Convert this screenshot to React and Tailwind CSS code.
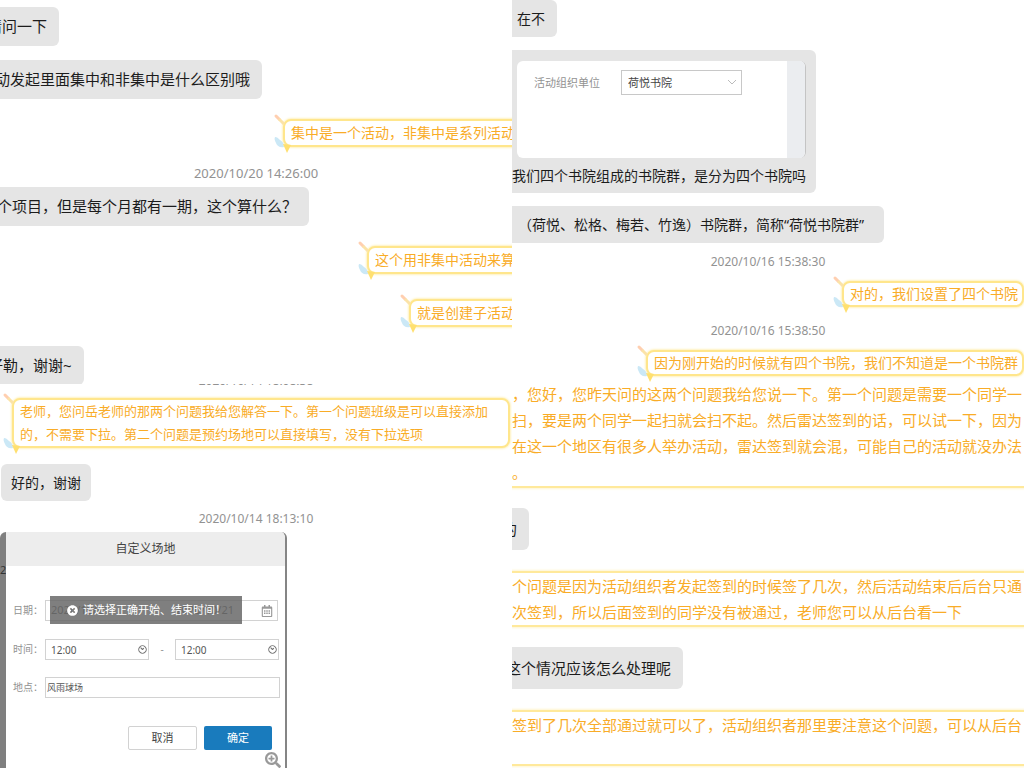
import React from 'react';
import { Clock3 } from 'lucide-react';
import { FaRegCalendarAlt, FaSearchPlus, FaTimesCircle } from 'react-icons/fa';

const Stamp = ({ children, className = '' }) => (
  <time className={`block text-center leading-4 text-[#929292] ${className}`}>{children}</time>
);

const Received = ({ children, className = '' }) => (
  <div className={`w-fit whitespace-nowrap rounded-md bg-[#e5e5e5] px-3 text-[#1c1c1c] ${className}`}>{children}</div>
);

// Crayon in the top left corner, wing and pencil tip in the bottom left one
const BubbleDoodles = () => (
  <>
    <svg className="absolute -top-2 -left-3 h-4 w-4" viewBox="0 0 16 16" fill="none">
      <path d="M3 3l3 3" stroke="#ffcfb0" strokeWidth="3" strokeLinecap="round" />
      <path d="M6 6l5 5" stroke="#fbe3a8" strokeWidth="3" />
    </svg>
    <svg className="absolute -bottom-2.5 -left-3 h-5 w-5" viewBox="0 0 20 20" fill="none">
      <path d="M2 2c2 0 3 1 5 3 2 1 4 3 4 7-4 1-7-1-8-4-1-2-2-4-1-6z" fill="#cbe8f6" />
      <path d="M10 9l8 1-4 8z" fill="#ffe070" />
    </svg>
  </>
);

const Sent = ({ children, className = '' }) => (
  <div
    className={`relative whitespace-nowrap rounded-lg border-2 border-[#ffe68c] bg-white px-1.5 text-[#f9ac27] shadow-[0_0_2px_1px_#fff2bf] ${className}`}
  >
    <BubbleDoodles />
    {children}
  </div>
);

const WideSent = ({ lines, className = '' }) => (
  <div
    className={`whitespace-nowrap border-b-2 border-[#ffe99b] text-[15px] leading-[26px] text-[#f9ac27] shadow-[0_0_2px_1px_#fff5cf] ${className}`}
  >
    {lines.map((line) => (
      <p key={line}>{line}</p>
    ))}
  </div>
);

const GroupQuestions = () => (
  <section className="flex flex-col overflow-hidden pt-[7px] text-[15px]">
    <Received className="-ml-[25px] leading-[39px]">请问一下</Received>
    <Received className="mt-3.5 -ml-8 leading-[39px]">活动发起里面集中和非集中是什么区别哦</Received>
    <Sent className="mt-5 -mr-[11px] self-end text-sm leading-6">集中是一个活动，非集中是系列活动</Sent>
    <Stamp className="mt-[18px] text-[13px]">2020/10/20 14:26:00</Stamp>
    <Received className="mt-1.5 -ml-[30px] leading-[39px]">一个项目，但是每个月都有一期，这个算什么？</Received>
    <Sent className="mt-5 -mr-[11px] self-end text-sm leading-6">这个用非集中活动来算</Sent>
    <Sent className="mt-[25px] -mr-[11px] self-end text-sm leading-6">就是创建子活动</Sent>
    <Received className="mt-[19px] -ml-6 leading-[39px]">好勒，谢谢~</Received>
  </section>
);

const CollegeQuestions = () => (
  <section className="flex flex-col overflow-hidden text-sm">
    <Received className="-ml-[7px] leading-[37px]">在不</Received>
    <div className="mt-[13px] -ml-3 w-fit rounded-md bg-[#e5e5e5] pt-[11px] pr-2.5 pl-3 text-[#1c1c1c]">
      <div className="ml-[5px] flex h-[97px] overflow-hidden rounded-md border-r border-[#c4c4c4] bg-white text-[11px]">
        <div className="flex flex-1 items-start pt-[9px] pl-[17px]">
          <label htmlFor="unit" className="w-[87px] leading-[26px] text-[#929292]">活动组织单位</label>
          <div className="relative w-[121px]">
            <select
              id="unit"
              className="h-[25px] w-full appearance-none border border-[#c8c8c8] bg-white pl-1.5 text-[11px] text-[#444]"
            >
              <option>荷悦书院</option>
            </select>
            <svg className="pointer-events-none absolute top-2 right-1.5 h-2 w-2" viewBox="0 0 8 8" fill="none" stroke="#bbb">
              <path d="M0 2l4 4 4-4" />
            </svg>
          </div>
        </div>
        <div className="w-[18px] bg-[#ebedf0]" />
      </div>
      <p className="whitespace-nowrap leading-[35px]">我们四个书院组成的书院群，是分为四个书院吗</p>
    </div>
    <Received className="mt-[13px] -ml-1.5 pr-5 leading-[37px]">
      （荷悦、松格、梅若、竹逸）书院群，简称“荷悦书院群”
    </Received>
    <Stamp className="mt-[11px] text-xs">2020/10/16 15:38:30</Stamp>
    <Sent className="mt-[11px] self-end pr-1 leading-[22px]">对的，我们设置了四个书院</Sent>
    <Stamp className="mt-4 text-xs">2020/10/16 15:38:50</Stamp>
    <Sent className="mt-[11px] self-end pr-1 leading-[22px]">因为刚开始的时候就有四个书院，我们不知道是一个书院群</Sent>
  </section>
);

const inputBox = 'h-[21px] border border-[#d2d2d2] bg-white text-[#555]';

const TimeField = ({ id, label }) => (
  <div className="relative w-[104px]">
    <input id={id} aria-label={label} defaultValue="12:00" className={`${inputBox} w-full pl-[5px] text-[10px]`} />
    <Clock3 className="absolute top-1.5 right-0.5 h-[9px] w-[9px] -rotate-45 text-[#777]" strokeWidth={3} />
  </div>
);

const VenueDialog = () => (
  <div className="relative mt-[5px] flex h-[240px] w-[287px] shrink-0 overflow-hidden rounded-t-md border-r-2 border-[#858585] bg-[#7f7f7f]">
    <span className="w-1.5 shrink-0 overflow-hidden pt-[30px] text-[11px] text-[#333]">2</span>
    <form className="flex-1 bg-white text-[10px] text-[#929292]" onSubmit={(e) => e.preventDefault()}>
      <h2 className="bg-[#ededed] text-center text-xs leading-[34px] text-[#444]">自定义场地</h2>
      <div className="relative mt-[34px] flex items-center pl-[7px]">
        <label htmlFor="start-date" className="w-8">日期：</label>
        <div className={`${inputBox} flex w-[233px] items-center pr-1 pl-[5px]`}>
          <input id="start-date" defaultValue="2020/10/21" className="w-16 text-[11px]" />
          <input aria-label="结束日期" defaultValue="2020/10/21" className="ml-auto w-[66px] text-right text-[11px]" />
          <FaRegCalendarAlt className="ml-[27px] h-3 w-3 text-[#999]" />
        </div>
        {/* Validation toast */}
        <div role="alert" className="absolute -top-1 left-11 flex h-7 w-48 items-center bg-[#686868]/85 pl-[17px] text-[11px] text-white">
          <FaTimesCircle className="mr-[5px] h-[11px] w-[11px]" />
          请选择正确开始、结束时间！
        </div>
      </div>
      <div className="mt-[18px] flex items-center pl-[7px]">
        <label htmlFor="start-time" className="w-8">时间：</label>
        <TimeField id="start-time" label="开始时间" />
        <span className="w-[26px] text-center">-</span>
        <TimeField id="end-time" label="结束时间" />
      </div>
      <div className="mt-[17px] flex items-center pl-[7px]">
        <label htmlFor="place" className="w-8">地点：</label>
        <input id="place" defaultValue="风雨球场" className={`${inputBox} w-[235px] pl-px text-[9px]`} />
      </div>
      <div className="mt-7 flex justify-end gap-[7px] pr-[13px] text-[11px]">
        <button type="button" className="h-6 w-[69px] rounded-xs border border-[#d2d2d2] bg-white text-[#444]">取消</button>
        <button type="submit" className="h-6 w-[68px] rounded-xs bg-[#197bbd] text-white">确定</button>
      </div>
    </form>
    <FaSearchPlus className="absolute right-1 bottom-1 h-4 w-4 text-[#999]" />
  </div>
);

const VenueQuestions = () => (
  <section className="flex flex-col overflow-hidden text-[13px]">
    <Stamp className="-mt-[11px] text-xs">2020/10/14 18:08:38</Stamp>
    <Sent className="mt-[9px] mr-0.5 ml-3 leading-[23px]">
      <p>老师，您问岳老师的那两个问题我给您解答一下。第一个问题班级是可以直接添加</p>
      <p>的，不需要下拉。第二个问题是预约场地可以直接填写，没有下拉选项</p>
    </Sent>
    <Received className="mt-4 ml-px pr-2.5 pl-2.5 text-sm leading-[37px]">好的，谢谢</Received>
    <Stamp className="mt-2.5 text-xs">2020/10/14 18:13:10</Stamp>
    <VenueDialog />
  </section>
);

const SignInQuestions = () => (
  <section className="flex flex-col overflow-hidden text-[15px]">
    <WideSent
      className="-mt-[3px] pb-px"
      lines={[
        '，您好，您昨天问的这两个问题我给您说一下。第一个问题是需要一个同学一',
        '扫，要是两个同学一起扫就会扫不起。然后雷达签到的话，可以试一下，因为',
        '在这一个地区有很多人举办活动，雷达签到就会混，可能自己的活动就没办法',
        '。',
      ]}
    />
    <Received className="mt-5 -ml-[22px] leading-[42px]">的</Received>
    <WideSent
      className="mt-[21px] border-t-2"
      lines={[
        '个问题是因为活动组织者发起签到的时候签了几次，然后活动结束后后台只通',
        '次签到，所以后面签到的同学没有被通过，老师您可以从后台看一下',
      ]}
    />
    <Received className="mt-5 -ml-[18px] leading-[42px]">这个情况应该怎么处理呢</Received>
    <WideSent
      className="mt-[21px] border-t-2 pb-[26px]"
      lines={['签到了几次全部通过就可以了，活动组织者那里要注意这个问题，可以从后台']}
    />
  </section>
);

const App = () => {
  return (
    <main className="grid h-screen grid-cols-2 grid-rows-2 overflow-hidden bg-white font-['Noto_Sans','Noto_Sans_CJK_SC',sans-serif]">
      <GroupQuestions />
      <CollegeQuestions />
      <VenueQuestions />
      <SignInQuestions />
    </main>
  );
};

export default App;
